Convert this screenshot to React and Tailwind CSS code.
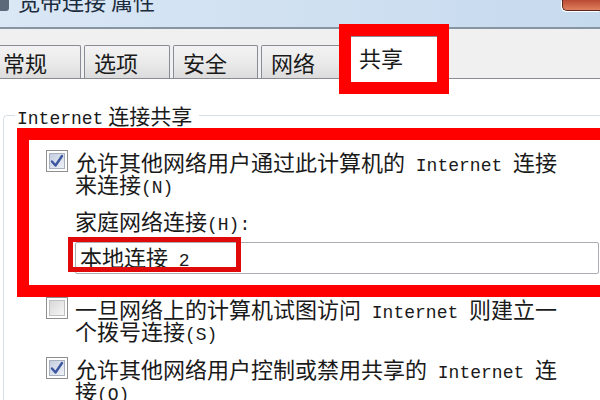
import React from "react";

function Mono({ children }) {
  return <span className="font-['Liberation_Mono',monospace] text-[18px] leading-[22px]">{children}</span>;
}

function Line({ children }) {
  return <div className="h-[22px] text-[22px] leading-[22px] whitespace-nowrap">{children}</div>;
}

function Check({ checked }) {
  return (
    <div className="w-[22px] h-[22px] shrink-0 border border-[#8f8f8f] bg-white p-[2px]">
      <div
        className={
          checked
            ? "w-full h-full border border-[#a8b0c0] bg-gradient-to-br from-[#c4cde0] to-[#eef1f6] flex items-center justify-center"
            : "w-full h-full border border-[#c0c0c0] bg-gradient-to-br from-[#d8d8d8] to-[#f6f6f6]"
        }
      >
        {checked && (
          <svg width="14" height="14" viewBox="0 0 14 14">
            <path d="M2 7.5 L5.5 11.5 L12 2" fill="none" stroke="#3c56a0" strokeWidth="2.4" strokeLinecap="round" strokeLinejoin="round" />
          </svg>
        )}
      </div>
    </div>
  );
}

function Tab({ label, w, selected }) {
  if (selected) {
    return (
      <div className={`relative z-10 -mb-px h-[43px] ${w} bg-white border border-b-0 border-[#898c95] rounded-t-[2px] pl-[9px] pt-[9px] text-[22px] leading-[22px] text-[#1a1a1a]`}>
        {label}
      </div>
    );
  }
  return (
    <div className={`h-[33px] ${w} bg-gradient-to-b from-[#f3f3f3] via-[#ebebeb] to-[#dcdcdc] border border-b-0 border-[#898c95] rounded-t-[2px] pl-[9px] pt-[5px] text-[22px] leading-[22px] text-[#1a1a1a]`}>
      {label}
    </div>
  );
}

export default function App() {
  return (
    <div className="relative w-[600px] h-[400px] overflow-hidden bg-white font-['Noto_Sans_CJK_SC',sans-serif] text-[#1a1a1a]">
      {/* title bar */}
      <div className="h-[29px] flex items-start justify-between bg-gradient-to-r from-[#dae7f5] to-[#c6daee] border-b-2 border-[#8794a2] overflow-hidden">
        <div className="flex items-start -mt-[11px]">
          <div className="w-[9px] h-[22px] bg-[#3b4a5a] rounded-r-[3px] opacity-80"></div>
          <div className="ml-[9px] text-[22px] leading-[22px] text-[#1b2b3d] whitespace-nowrap">宽带连接 属性</div>
        </div>
        <div className="w-[38px] h-[11px] rounded-bl-[5px] border-l border-b border-[#5a2a22] bg-gradient-to-b from-[#b84a33] to-[#e0805f] shadow-[-1px_1px_0_#ffffff]"></div>
      </div>

      {/* tab strip */}
      <div className="h-[50px] bg-[#f0f0f0] flex items-end gap-[3px] -ml-[7px] pl-0 border-b border-[#898c95]">
        <Tab label="常规" w="w-[88px]" />
        <Tab label="选项" w="w-[86px]" />
        <Tab label="安全" w="w-[85px]" />
        <Tab label="网络" w="w-[85px]" />
        <Tab label="共享" w="w-[92px]" selected />
      </div>

      {/* page */}
      <div className="pt-[36px]">
        <div className="ml-[3px] -mr-[20px] h-[400px] border border-[#d5dfe5] rounded-[4px]">
          <div className="-mt-[12px] ml-[11px] w-fit h-[22px] bg-white pl-[2px] pr-[7px] text-[21px] leading-[22px] whitespace-nowrap">
            <Mono>Internet</Mono> 连接共享
          </div>

          <div className="mt-[24px] ml-[42px] flex gap-[7px] items-start">
            <Check checked />
            <div>
              <Line>允许其他网络用户通过此计算机的<Mono> Internet </Mono>连接</Line>
              <Line>来连接<Mono>(N)</Mono></Line>
            </div>
          </div>

          <div className="mt-[15px] ml-[71px]">
            <Line>家庭网络连接<Mono>(H):</Mono></Line>
          </div>

          <div className="mt-[11px] ml-[71px] w-[524px] h-[32px] border border-[#abadb3] rounded-[2px] bg-white pl-[4px] pt-[2px]">
            <Line>本地连接<Mono> 2</Mono></Line>
          </div>

          <div className="mt-[23px] ml-[42px] flex gap-[7px] items-start">
            <Check />
            <div>
              <Line>一旦网络上的计算机试图访问<Mono> Internet </Mono>则建立一</Line>
              <Line>个拨号连接<Mono>(S)</Mono></Line>
            </div>
          </div>

          <div className="mt-[16px] ml-[42px] flex gap-[7px] items-start">
            <Check checked />
            <div>
              <Line>允许其他网络用户控制或禁用共享的<Mono> Internet </Mono>连</Line>
              <Line>接<Mono>(O)</Mono></Line>
            </div>
          </div>
        </div>
      </div>

      {/* red annotation boxes */}
      <div className="absolute left-[339px] top-[24px] w-[110px] h-[70px] border-[12px] border-[#fe0000] z-20"></div>
      <div className="absolute left-[17px] top-[128px] -right-[30px] h-[169px] border-[12px] border-[#fe0000] z-20"></div>
      <div className="absolute left-[68px] top-[237px] w-[173px] h-[35px] border-[5px] border-[#e00a0a] z-20"></div>
    </div>
  );
}
